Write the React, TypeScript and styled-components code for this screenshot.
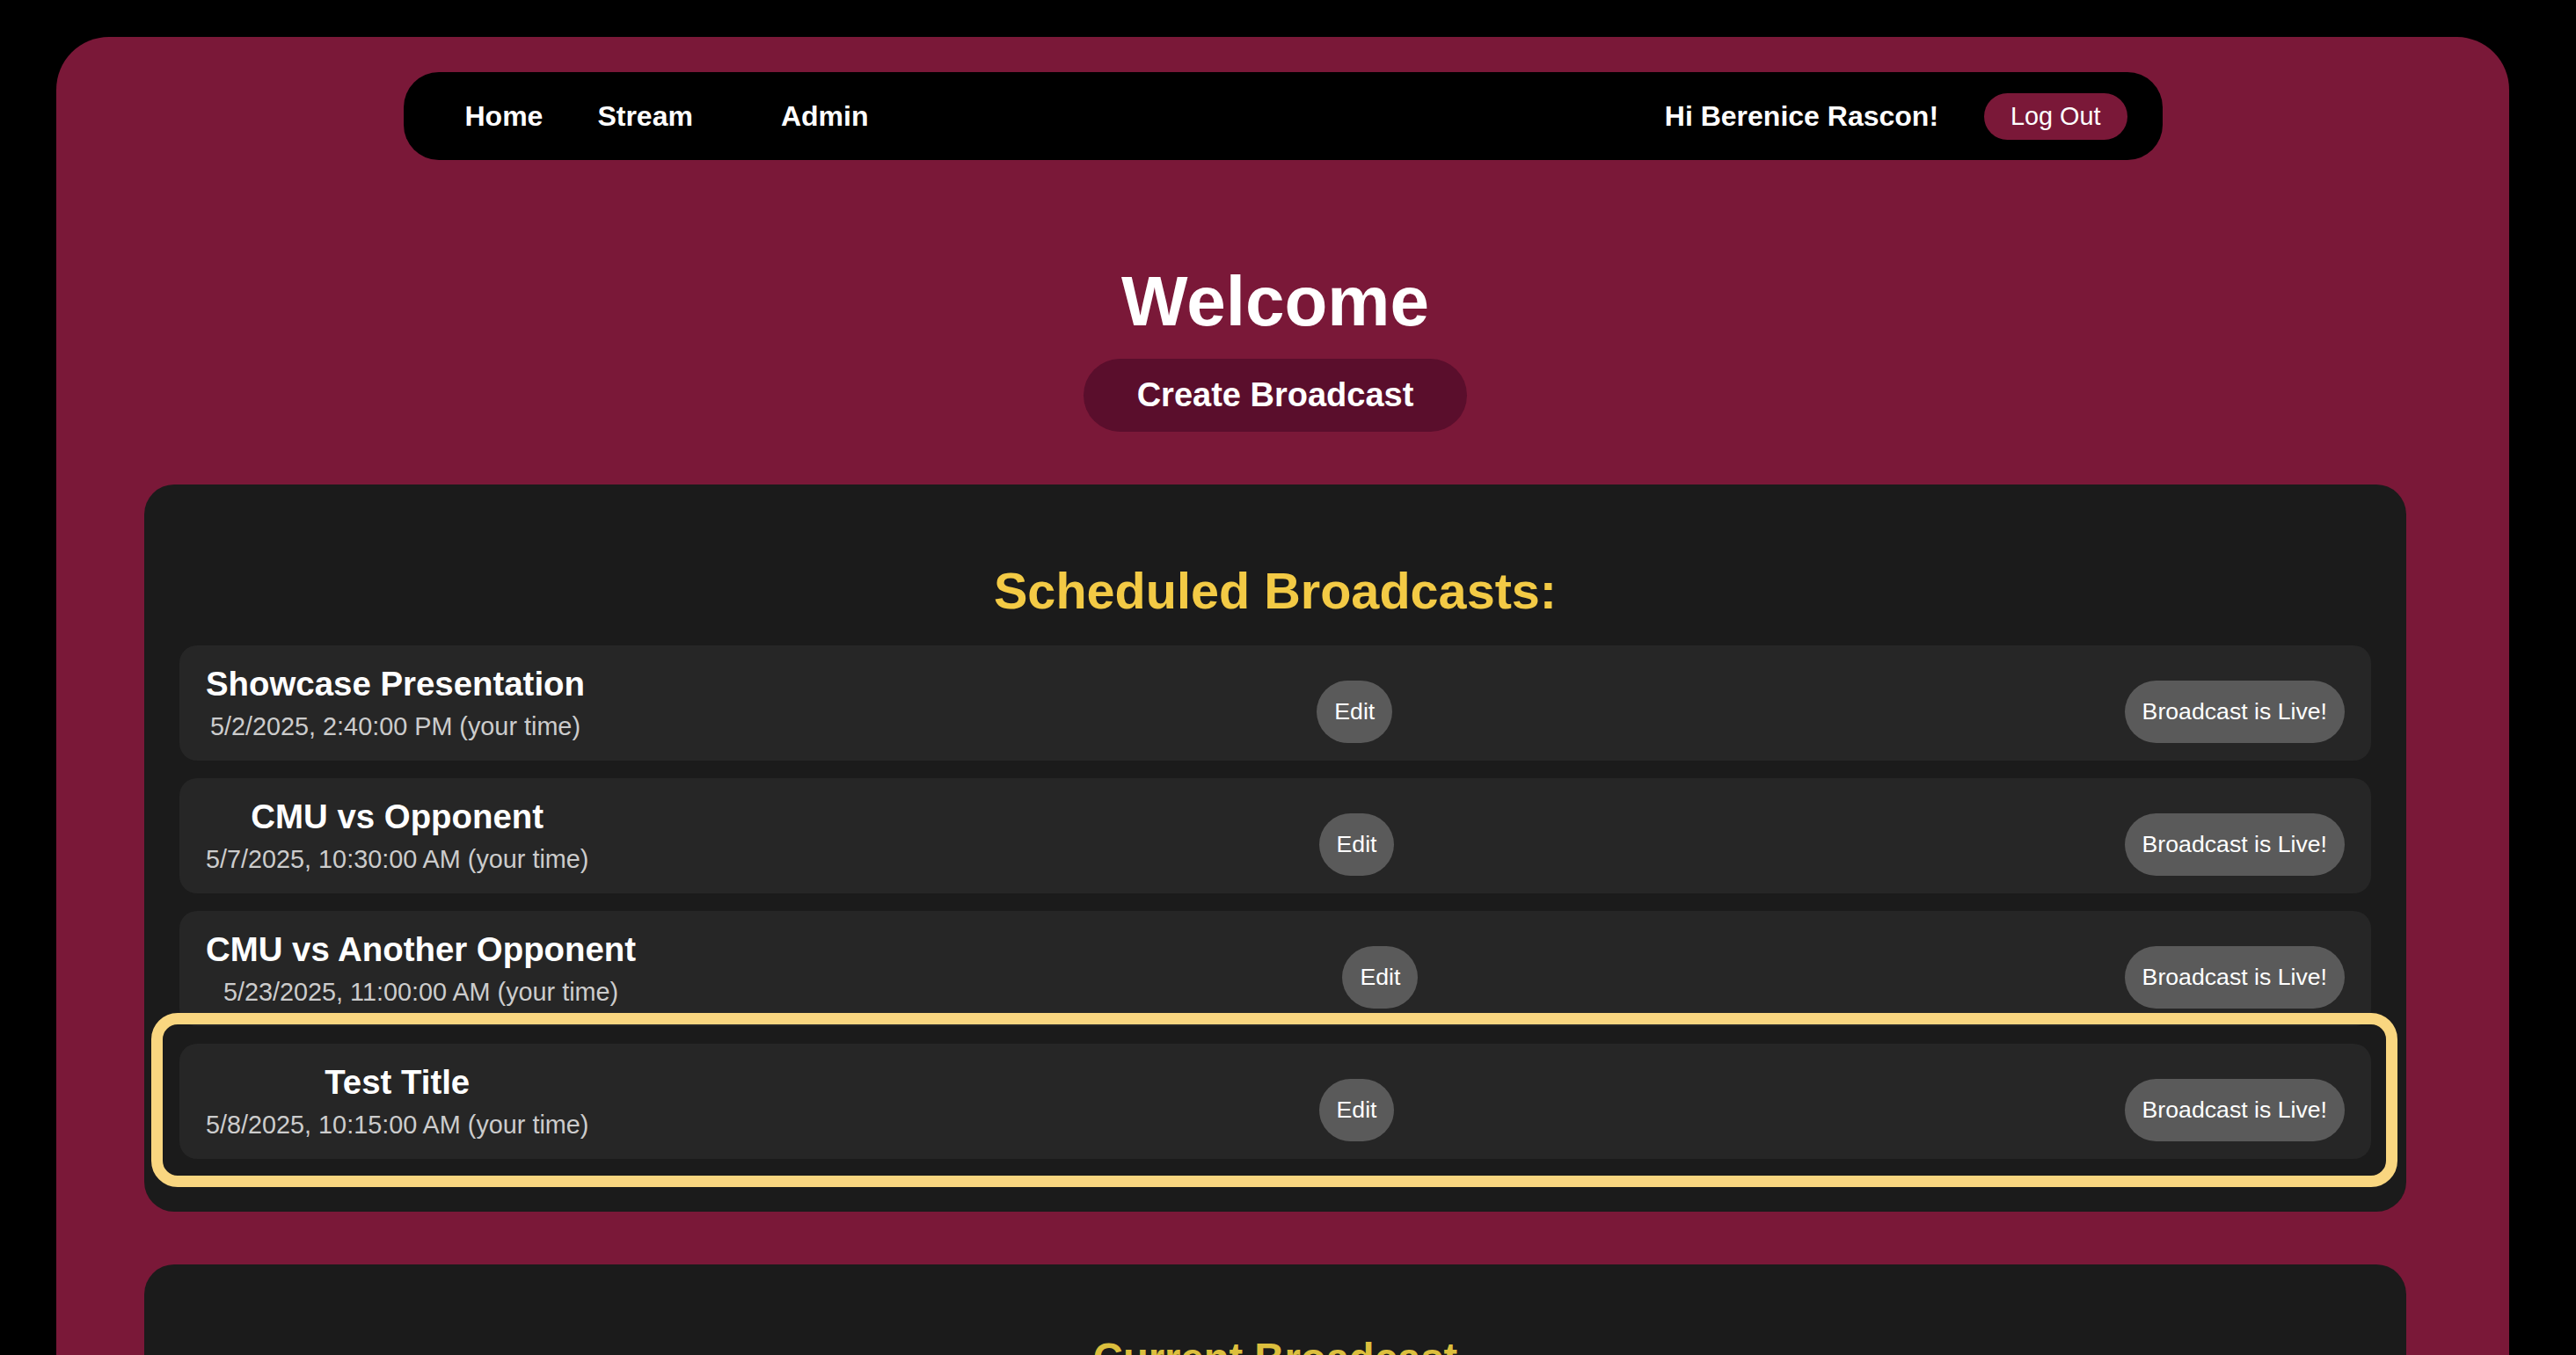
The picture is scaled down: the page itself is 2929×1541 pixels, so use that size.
import React from "react";
import styled, { createGlobalStyle, css } from "styled-components";

const GlobalStyle = createGlobalStyle`
  html, body {
    margin: 0;
    padding: 0;
    background: #000;
    font-family: "Liberation Sans", Arial, sans-serif;
  }
  * { box-sizing: border-box; }
`;

const Frame = styled.div`
  margin: 42px 0 0 64px;
  width: 2789px;
  min-height: 2200px;
  background: #7a1838;
  border-radius: 60px 60px 0 0;
  padding-top: 40px;
`;

const NavBar = styled.nav`
  width: 2000px;
  height: 100px;
  margin: 0 auto;
  background: #000;
  border-radius: 40px;
  display: flex;
  align-items: center;
  justify-content: space-between;
  padding: 0 40px 0 70px;
`;

const NavGroup = styled.div`
  display: flex;
  align-items: center;
`;

const NavLink = styled.a<{ $gap?: number }>`
  color: #fff;
  font-size: 32px;
  font-weight: 700;
  text-decoration: none;
  margin-right: ${(p) => p.$gap ?? 0}px;
`;

const Greeting = styled.span`
  color: #fff;
  font-size: 32px;
  font-weight: 700;
  margin-right: 52px;
`;

const LogOutButton = styled.button`
  background: #7a1838;
  color: #fff;
  border: none;
  border-radius: 30px;
  font-family: inherit;
  font-size: 28.8px;
  line-height: normal;
  padding: 10px 30px;
`;

const Main = styled.main`
  padding: 0 117px 0 100px;
  display: flex;
  flex-direction: column;
  align-items: center;
`;

const Welcome = styled.h1`
  margin: 115px 0 19px;
  font-size: 80px;
  font-weight: 700;
  line-height: normal;
  color: #fff;
`;

const CreateButton = styled.button`
  background: #5a0e2c;
  color: #fff;
  border: none;
  border-radius: 42px;
  font-family: inherit;
  font-size: 38px;
  font-weight: 700;
  line-height: normal;
  padding: 20px 61px;
`;

const Panel = styled.section<{ $tall?: boolean }>`
  width: 100%;
  margin-top: 60px;
  background: #1b1b1b;
  border-radius: 34px;
  padding: 40px 40px 40px;
  ${(p) =>
    p.$tall &&
    css`
      min-height: 700px;
    `}
`;

const PanelTitle = styled.h2<{ $size: number; $color: string; $after: number }>`
  margin: ${(p) => (p.$size * 0.83).toFixed(1)}px 0 ${(p) => p.$after}px;
  text-align: center;
  font-size: ${(p) => p.$size}px;
  font-weight: 700;
  line-height: normal;
  color: ${(p) => p.$color};
`;

const Row = styled.div<{ $highlight?: boolean }>`
  position: relative;
  display: flex;
  justify-content: space-between;
  align-items: center;
  background: #262626;
  border-radius: 20px;
  padding: 20px 30px;
  margin-bottom: 20px;
  ${(p) =>
    p.$highlight &&
    css`
      &::after {
        content: "";
        position: absolute;
        top: -35px;
        right: -30px;
        bottom: -32px;
        left: -32px;
        border: 13px solid #f9d680;
        border-radius: 30px;
        pointer-events: none;
      }
    `}
`;

const Info = styled.div`
  display: flex;
  flex-direction: column;
  align-items: center;
  gap: 10px;
`;

const RowTitle = styled.h3`
  margin: 0;
  font-size: 38.4px;
  font-weight: 700;
  line-height: normal;
  color: #fff;
`;

const RowDate = styled.span`
  font-size: 28.8px;
  line-height: normal;
  color: #cccccc;
`;

const PillButton = styled.button`
  margin-top: 20px;
  background: #5a5a5a;
  color: #fff;
  border: none;
  border-radius: 36px;
  font-family: inherit;
  font-size: 26.67px;
  line-height: normal;
  padding: 20px;
`;

const broadcasts = [
  { title: "Showcase Presentation", date: "5/2/2025, 2:40:00 PM (your time)" },
  { title: "CMU vs Opponent", date: "5/7/2025, 10:30:00 AM (your time)" },
  { title: "CMU vs Another Opponent", date: "5/23/2025, 11:00:00 AM (your time)" },
  { title: "Test Title", date: "5/8/2025, 10:15:00 AM (your time)", highlight: true },
];

export default function App() {
  return (
    <>
      <GlobalStyle />
      <Frame>
        <NavBar>
          <NavGroup>
            <NavLink href="#" $gap={62}>Home</NavLink>
            <NavLink href="#" $gap={100}>Stream</NavLink>
            <NavLink href="#">Admin</NavLink>
          </NavGroup>
          <NavGroup>
            <Greeting>Hi Berenice Rascon!</Greeting>
            <LogOutButton>Log Out</LogOutButton>
          </NavGroup>
        </NavBar>
        <Main>
          <Welcome>Welcome</Welcome>
          <CreateButton>Create Broadcast</CreateButton>
          <Panel>
            <PanelTitle $size={57.6} $color="#f3ca45" $after={29}>
              Scheduled Broadcasts:
            </PanelTitle>
            {broadcasts.map((b) => (
              <Row key={b.title} $highlight={b.highlight}>
                <Info>
                  <RowTitle>{b.title}</RowTitle>
                  <RowDate>{b.date}</RowDate>
                </Info>
                <PillButton>Edit</PillButton>
                <PillButton>Broadcast is Live!</PillButton>
              </Row>
            ))}
          </Panel>
          <Panel $tall>
            <PanelTitle $size={47.2} $color="#dcbf3e" $after={40}>
              Current Broadcast
            </PanelTitle>
          </Panel>
        </Main>
      </Frame>
    </>
  );
}
